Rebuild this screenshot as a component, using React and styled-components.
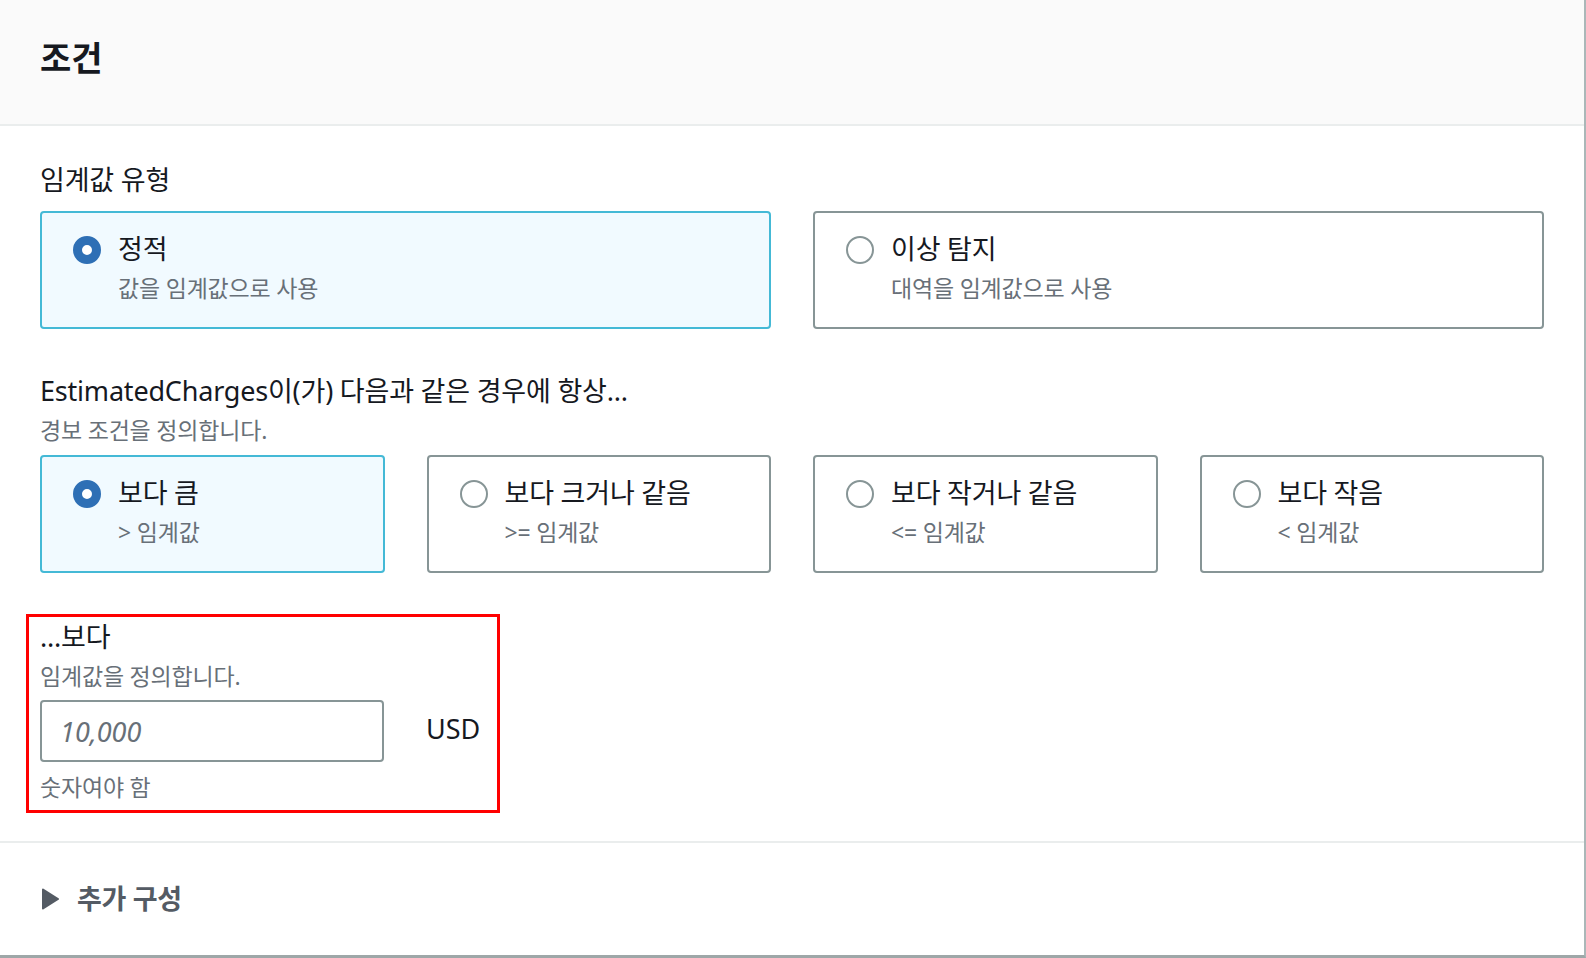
import styled, { createGlobalStyle } from "styled-components";

const GlobalStyle = createGlobalStyle`
  html, body {
    margin: 0;
    padding: 0;
    background: #ffffff;
  }
  body {
    font-family: "Noto Sans", "Noto Sans CJK KR", sans-serif;
    color: #16191f;
  }
  * {
    box-sizing: border-box;
  }
`;

const Panel = styled.div`
  width: 1586px;
  height: 958px;
  background: #ffffff;
  border-right: 2px solid #aab7b8;
  border-bottom: 3px solid #9ea7a8;
  display: flex;
  flex-direction: column;
`;

const Header = styled.div`
  height: 126px;
  padding: 0 40px 8px;
  display: flex;
  align-items: center;
  background: #fafafa;
  border-bottom: 2px solid #eaeded;
`;

const Title = styled.h2`
  margin: 0;
  font-size: 34px;
  font-weight: 700;
  line-height: 44px;
  color: #16191f;
`;

const Body = styled.div`
  padding: 34px 40px 28px;
  border-bottom: 2px solid #eaeded;
`;

const Field = styled.div`
  & + & {
    margin-top: 42px;
  }
`;

const Label = styled.div`
  font-size: 27px;
  line-height: 40px;
  letter-spacing: -0.2px;
  color: #16191f;
`;

const Description = styled.div`
  font-size: 23px;
  line-height: 32px;
  letter-spacing: -0.2px;
  color: #687078;
  margin-top: ${(p) => p.$gap || 0}px;
`;

const TileGrid = styled.div`
  display: grid;
  grid-template-columns: repeat(${(p) => p.$cols}, 1fr);
  column-gap: 42px;
  margin-top: ${(p) => p.$gap}px;
`;

const Tile = styled.label`
  height: 118px;
  padding: 16px 30px 16px 31px;
  display: flex;
  align-items: flex-start;
  gap: 17px;
  border: 2px solid ${(p) => (p.$checked ? "#44b9d6" : "#879596")};
  background: ${(p) => (p.$checked ? "#f1faff" : "#ffffff")};
  border-radius: 4px;
  cursor: pointer;
`;

const Radio = styled.span`
  flex: none;
  width: 28px;
  height: 28px;
  margin-top: 7px;
  border-radius: 50%;
  background: #ffffff;
  border: ${(p) => (p.$checked ? "9px solid #2e6fb5" : "2px solid #879596")};
`;

const TileText = styled.div`
  display: flex;
  flex-direction: column;
`;

const TileTitle = styled.span`
  font-size: 27px;
  line-height: 40px;
  letter-spacing: -0.2px;
  color: #16191f;
`;

const TileDesc = styled.span`
  font-size: 23px;
  line-height: 32px;
  letter-spacing: -0.2px;
  color: #687078;
  margin-top: 3px;
`;

const Highlight = styled.div`
  width: 474px;
  margin: 41px 0 0 -14px;
  padding: 0 11px 7px;
  border: 3px solid #ff0000;
`;

const InputRow = styled.div`
  display: flex;
  align-items: center;
  gap: 42px;
  margin-top: 8px;
`;

const NumberInput = styled.input`
  width: 344px;
  height: 62px;
  padding: 0 18px;
  border: 2px solid #879596;
  border-radius: 4px;
  font-family: "Noto Sans", "Noto Sans CJK KR", sans-serif;
  font-size: 27px;
  color: #16191f;
  background: #ffffff;
  outline: none;

  &::placeholder {
    color: #687078;
    font-style: italic;
  }
`;

const Unit = styled.span`
  font-size: 27px;
  line-height: 40px;
  margin-top: -4px;
  color: #16191f;
`;

const Footer = styled.div`
  flex: 1;
  padding: 0 40px 0 42px;
  display: flex;
  align-items: center;
`;

const Expander = styled.button`
  display: flex;
  align-items: center;
  gap: 18px;
  padding: 0;
  border: none;
  background: none;
  font-family: "Noto Sans", "Noto Sans CJK KR", sans-serif;
  font-size: 27px;
  font-weight: 700;
  line-height: 40px;
  letter-spacing: -0.3px;
  color: #545b64;
  cursor: pointer;
`;

const thresholdTypes = [
  { title: "정적", desc: "값을 임계값으로 사용", checked: true },
  { title: "이상 탐지", desc: "대역을 임계값으로 사용" },
];

const conditions = [
  { title: "보다 큼", desc: "> 임계값", checked: true },
  { title: "보다 크거나 같음", desc: ">= 임계값" },
  { title: "보다 작거나 같음", desc: "<= 임계값" },
  { title: "보다 작음", desc: "< 임계값" },
];

function OptionTile({ option }) {
  return (
    <Tile $checked={option.checked}>
      <Radio $checked={option.checked} />
      <TileText>
        <TileTitle>{option.title}</TileTitle>
        <TileDesc>{option.desc}</TileDesc>
      </TileText>
    </Tile>
  );
}

export default function App() {
  return (
    <>
      <GlobalStyle />
      <Panel>
        <Header>
          <Title>조건</Title>
        </Header>
        <Body>
          <Field>
            <Label>임계값 유형</Label>
            <TileGrid $cols={2} $gap={11}>
              {thresholdTypes.map((o) => (
                <OptionTile key={o.title} option={o} />
              ))}
            </TileGrid>
          </Field>
          <Field>
            <Label>EstimatedCharges이(가) 다음과 같은 경우에 항상...</Label>
            <Description $gap={3}>경보 조건을 정의합니다.</Description>
            <TileGrid $cols={4} $gap={9}>
              {conditions.map((o) => (
                <OptionTile key={o.title} option={o} />
              ))}
            </TileGrid>
          </Field>
          <Highlight>
            <Label>...보다</Label>
            <Description $gap={3}>임계값을 정의합니다.</Description>
            <InputRow>
              <NumberInput placeholder="10,000" />
              <Unit>USD</Unit>
            </InputRow>
            <Description $gap={9}>숫자여야 함</Description>
          </Highlight>
        </Body>
        <Footer>
          <Expander>
            <svg width="17" height="22" viewBox="0 0 17 22">
              <path d="M1 1.5 L16 11 L1 20.5 Z" fill="#545b64" stroke="#545b64" strokeWidth="2" strokeLinejoin="round" />
            </svg>
            추가 구성
          </Expander>
        </Footer>
      </Panel>
    </>
  );
}
